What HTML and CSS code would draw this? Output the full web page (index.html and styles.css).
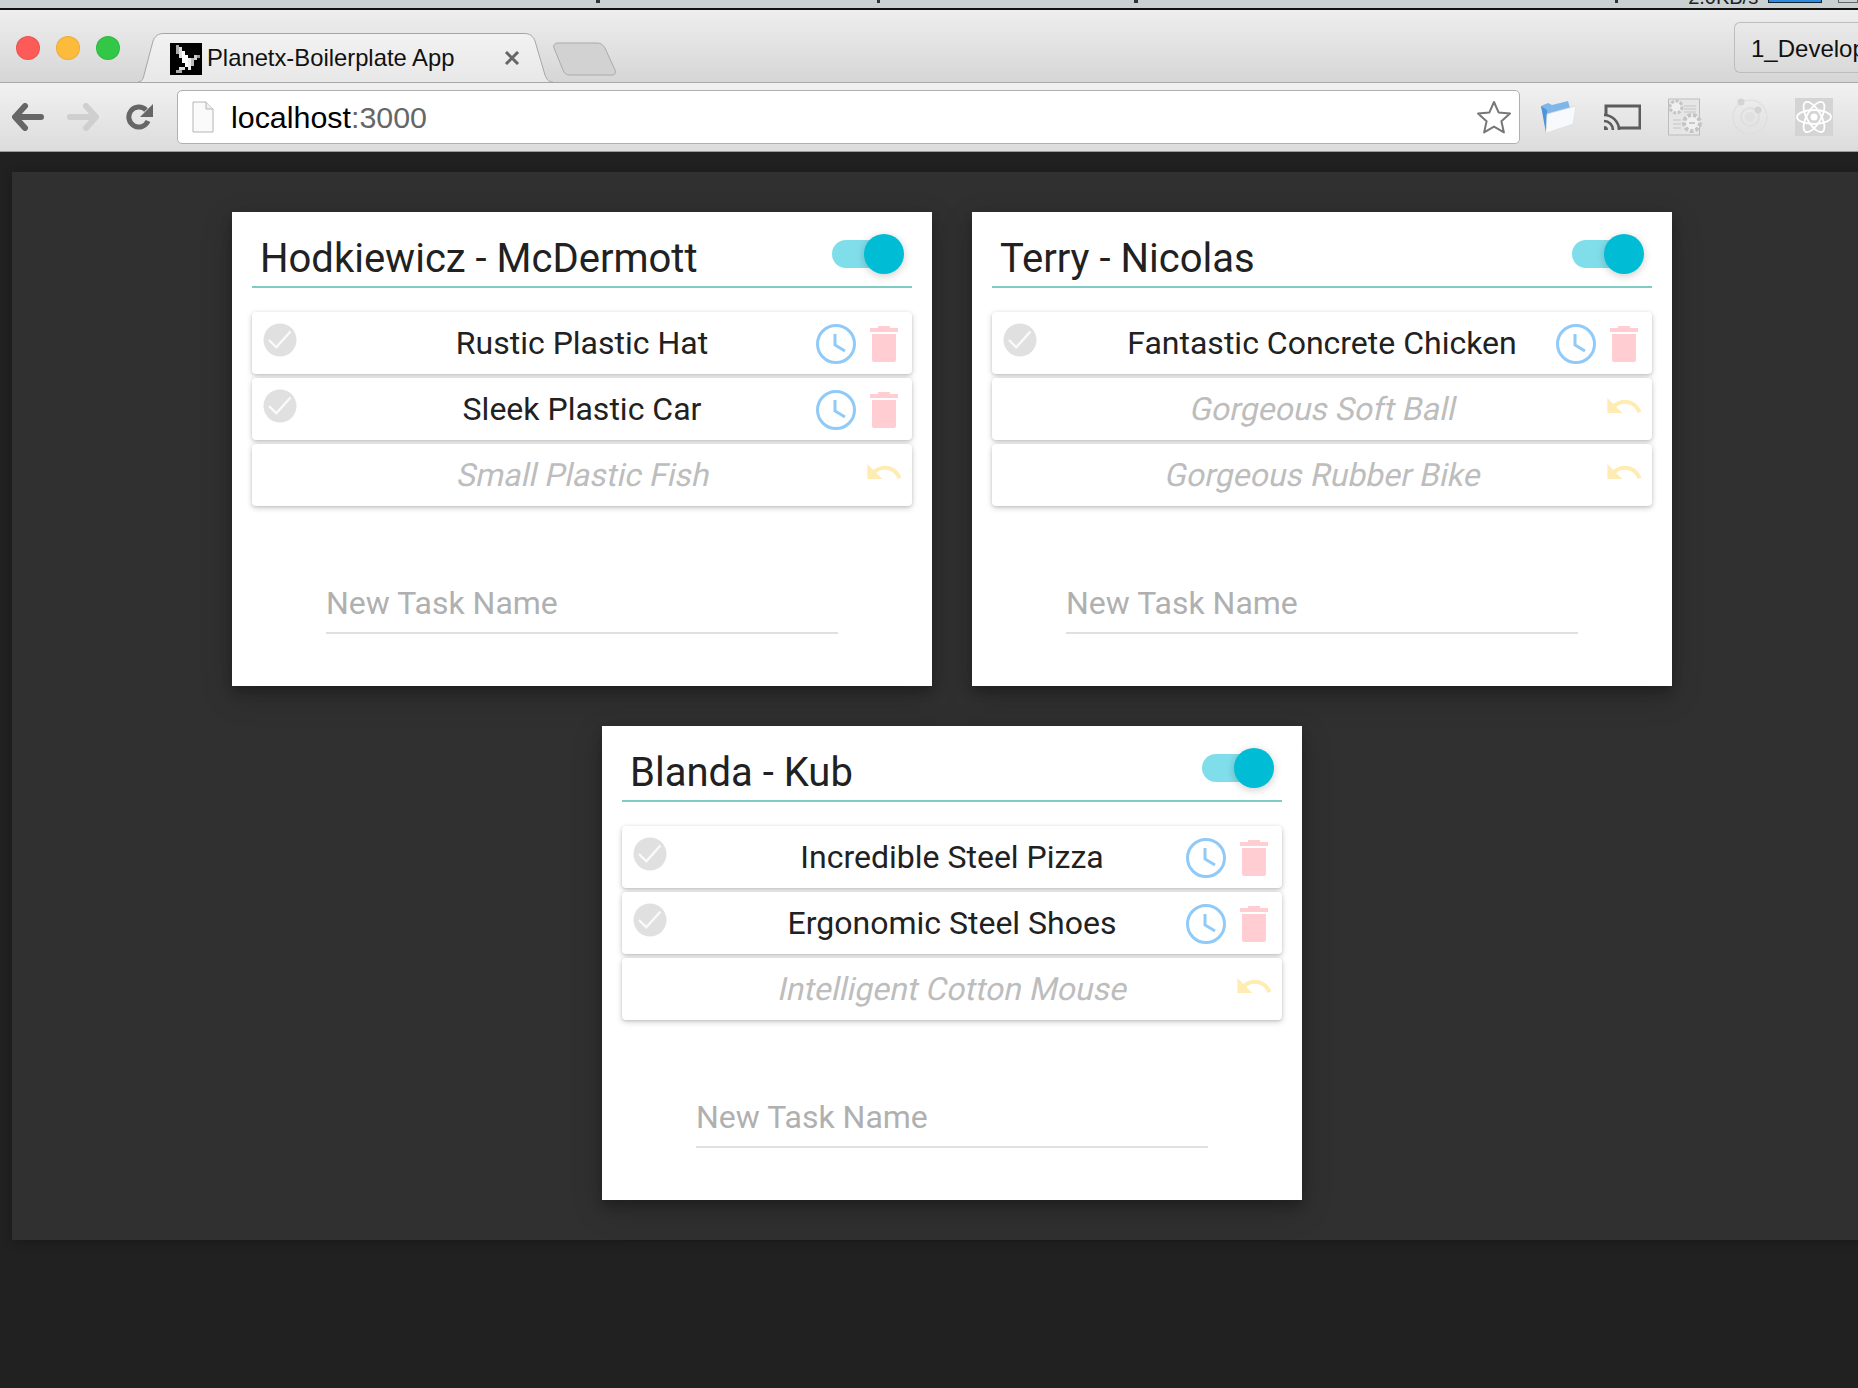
FILE: index.html
```html
<!DOCTYPE html>
<html lang="en">
<head>
    <meta charset="UTF-8">
    <meta name="viewport" content="width=device-width, initial-scale=1.0">
    <title>Planetx-Boilerplate App</title>
    <link rel="stylesheet" href="styles.css">
</head>
<body>
    <!-- Bottom edge of the OS menu bar -->
    <div class="menubar">
        <span class="tick tick-a"></span>
        <span class="tick tick-b"></span>
        <span class="tick tick-c"></span>
        <span class="tick tick-d"></span>
        <span class="net-speed">2.0KB/s</span>
        <span class="net-meter"></span>
        <span class="net-box"></span>
    </div>

    <!-- Browser tabs -->
    <div class="tabstrip">
        <span class="light light-red"></span>
        <span class="light light-yellow"></span>
        <span class="light light-green"></span>
        <div class="tab">
            <svg class="tab-shape" viewBox="0 0 415 50" preserveAspectRatio="none">
                <defs>
                    <linearGradient id="tabFill" x1="0" y1="0" x2="0" y2="1">
                        <stop offset="0" stop-color="#f2f2f2"/>
                        <stop offset="1" stop-color="#e8e8e8"/>
                    </linearGradient>
                </defs>
                <path d="M0 49C3 49 5 47 6 42L15 8C17 3 20 .5 26 .5H386C392 .5 395 3 397 8L407 42C409 47 411 49 415 49" fill="url(#tabFill)" stroke="#a6a6a6"/>
            </svg>
            <svg class="favicon" viewBox="0 0 32 32" shape-rendering="crispEdges">
                <rect width="32" height="32" fill="#000"/>
                <rect x="6" y="2" width="3" height="9" fill="#aaa"/>
                <rect x="9" y="4" width="3" height="11" fill="#ddd"/>
                <rect x="12" y="8" width="3" height="12" fill="#fff"/>
                <rect x="15" y="12" width="3" height="12" fill="#fff"/>
                <rect x="18" y="15" width="3" height="12" fill="#eee"/>
                <rect x="21" y="15" width="3" height="8" fill="#bbb"/>
                <rect x="24" y="12" width="3" height="5" fill="#ccc"/>
                <rect x="27" y="12" width="3" height="3" fill="#999"/>
                <rect x="9" y="24" width="6" height="3" fill="#ddd"/>
                <rect x="6" y="27" width="6" height="3" fill="#aaa"/>
            </svg>
            <span class="tab-title">Planetx-Boilerplate App</span>
            <svg class="tab-close" viewBox="0 0 16 14">
                <path d="M2 1L14 13M14 1L2 13" stroke="#666" stroke-width="3" fill="none"/>
            </svg>
        </div>
        <svg class="new-tab" viewBox="0 0 64 34">
            <path d="M1 6C0 3 2 1 5 1H44C48 1 50 3 52 6L62 28C63 31 62 33 59 33H17C13 33 11 31 10 28Z" fill="#d2d2d2" stroke="#aaa"/>
        </svg>
        <div class="profile">1_Develop</div>
    </div>

    <!-- Browser toolbar -->
    <div class="toolbar">
        <svg class="nav-icon nav-back" viewBox="0 0 32 28">
            <path d="M13 3L3 14L13 25M4 14H29" fill="none" stroke="#666" stroke-width="6" stroke-linecap="round" stroke-linejoin="round"/>
        </svg>
        <svg class="nav-icon nav-forward" viewBox="0 0 32 28">
            <path d="M19 3L29 14L19 25M28 14H3" fill="none" stroke="#cfcfcf" stroke-width="6" stroke-linecap="round" stroke-linejoin="round"/>
        </svg>
        <svg class="nav-icon nav-reload" viewBox="0 0 28 28">
            <path d="M22 18A10 10 0 1 1 20 7" fill="none" stroke="#666" stroke-width="5"/>
            <path d="M27 1V14H14Z" fill="#666"/>
        </svg>
        <div class="address">
            <svg class="doc-icon" viewBox="0 0 24 32">
                <path d="M2 1H15L22 8V31H2Z" fill="#fafafa" stroke="#b4b4b4"/>
                <path d="M15 1V8H22" fill="#eee" stroke="#b4b4b4"/>
            </svg>
            <span class="url">localhost<span class="url-port">:3000</span></span>
            <svg class="star" viewBox="0 0 36 34">
                <path d="M18 2L22.6 12.4L34 13.6L25.4 21.2L27.9 32.4L18 26.6L8.1 32.4L10.6 21.2L2 13.6L13.4 12.4Z" fill="#fff" stroke="#777" stroke-width="2" stroke-linejoin="round"/>
            </svg>
        </div>
        <div class="ext-slot ext-slot-first">
            <svg class="ext-folder" viewBox="0 0 36 34">
                <path d="M1 6L8 3L12 5L28 1L30 8L7 30Z" fill="#7fb6ea"/>
                <path d="M6 33L1 6L7 10Z" fill="#4f93d8"/>
                <path d="M7 14L36 6L33 24L6 33Z" fill="#f7f9fb" stroke="#d5dde4" stroke-width=".6"/>
            </svg>
        </div>
        <div class="ext-slot">
            <svg class="ext-cast" viewBox="0 0 38 28">
                <path d="M3 13V3H37V25H17" fill="none" stroke="#5c5c5c" stroke-width="3"/>
                <path d="M1 12A15 15 0 0 1 16 27M1 18A9 9 0 0 1 10 27" fill="none" stroke="#5c5c5c" stroke-width="2.6"/>
                <path d="M1 23A4 4 0 0 1 5 27H1Z" fill="#5c5c5c"/>
            </svg>
        </div>
        <div class="ext-slot">
            <svg class="ext-gears" viewBox="0 0 38 38">
                <rect x="1.500" y="1" width="31" height="36" fill="#e6e6e6" stroke="#bdbdbd"/>
                <path d="M17 8H29M17 11H29M17 14H29M6 22H14M6 26H14M6 30H14" stroke="#cfcfcf" stroke-width="1.500"/>
                <circle cx="9" cy="9" r="6" fill="#f0f0f0" stroke="#c4c4c4" stroke-width="3" stroke-dasharray="3 1.500"/>
                <circle cx="25" cy="25" r="8" fill="#f0f0f0" stroke="#c4c4c4" stroke-width="4" stroke-dasharray="3.500 2"/>
                <path d="M22 25H28" stroke="#bdbdbd" stroke-width="1.500"/>
            </svg>
        </div>
        <div class="ext-slot">
            <svg class="ext-ring" viewBox="0 0 36 38">
                <circle cx="18" cy="19" r="17" fill="none" stroke="#dedede" stroke-width="1.200"/>
                <circle cx="18" cy="19" r="9" fill="none" stroke="#dedede" stroke-width="2"/>
                <circle cx="18" cy="19" r="5" fill="#e0e0e0"/>
                <circle cx="9" cy="4" r="3.500" fill="#d4d4d4"/>
                <circle cx="26" cy="12" r="3.500" fill="#d4d4d4"/>
            </svg>
        </div>
        <div class="ext-slot">
            <svg class="ext-react" viewBox="0 0 38 38">
                <rect width="38" height="38" fill="#d4d4d4"/>
                <g fill="none" stroke="#fff" stroke-width="1.800">
                    <ellipse cx="19" cy="19" rx="17" ry="7"/>
                    <ellipse cx="19" cy="19" rx="17" ry="7" transform="rotate(60 19 19)"/>
                    <ellipse cx="19" cy="19" rx="17" ry="7" transform="rotate(120 19 19)"/>
                </g>
                <circle cx="19" cy="19" r="3.500" fill="#fff"/>
            </svg>
        </div>
    </div>

    <!-- App -->
    <div class="page">
        <div class="board">

            <div class="card">
                <div class="card-header">
                    <h2 class="card-title">Hodkiewicz - McDermott</h2>
                    <div class="toggle"><span class="toggle-track"></span><span class="toggle-thumb"></span></div>
                </div>
                <div class="task-list">
                    <div class="task">
                        <svg class="check" viewBox="0 0 34 34"><circle cx="17" cy="17" r="16.500"/><path d="M6 17L13.300 24.300L27.500 8.500"/></svg>
                        <span class="task-name">Rustic Plastic Hat</span>
                        <div class="task-actions">
                            <svg class="clock" viewBox="0 0 40 40"><circle cx="20" cy="20" r="18.500"/><path d="M19 10V21L29 27"/></svg>
                            <svg class="trash" viewBox="0 0 28 36"><path d="M8 0H20V2H28V6H0V2H8ZM2 8H26V34C26 35 25 36 24 36H4C3 36 2 35 2 34Z"/></svg>
                        </div>
                    </div>
                    <div class="task">
                        <svg class="check" viewBox="0 0 34 34"><circle cx="17" cy="17" r="16.500"/><path d="M6 17L13.300 24.300L27.500 8.500"/></svg>
                        <span class="task-name">Sleek Plastic Car</span>
                        <div class="task-actions">
                            <svg class="clock" viewBox="0 0 40 40"><circle cx="20" cy="20" r="18.500"/><path d="M19 10V21L29 27"/></svg>
                            <svg class="trash" viewBox="0 0 28 36"><path d="M8 0H20V2H28V6H0V2H8ZM2 8H26V34C26 35 25 36 24 36H4C3 36 2 35 2 34Z"/></svg>
                        </div>
                    </div>
                    <div class="task task-done">
                        <span></span>
                        <span class="task-name">Small Plastic Fish</span>
                        <div class="task-actions">
                            <svg class="undo" viewBox="2 7 20 9"><path d="M12.500 8c-2.650 0-5.050.99-6.900 2.600L2 7v9h9l-3.620-3.620c1.390-1.160 3.160-1.880 5.120-1.880 3.540 0 6.550 2.310 7.600 5.500l2.370-.78C21.080 11.030 17.150 8 12.500 8z"/></svg>
                        </div>
                    </div>
                </div>
                <input class="new-task" type="text" placeholder="New Task Name">
            </div>

            <div class="card">
                <div class="card-header">
                    <h2 class="card-title">Terry - Nicolas</h2>
                    <div class="toggle"><span class="toggle-track"></span><span class="toggle-thumb"></span></div>
                </div>
                <div class="task-list">
                    <div class="task">
                        <svg class="check" viewBox="0 0 34 34"><circle cx="17" cy="17" r="16.500"/><path d="M6 17L13.300 24.300L27.500 8.500"/></svg>
                        <span class="task-name">Fantastic Concrete Chicken</span>
                        <div class="task-actions">
                            <svg class="clock" viewBox="0 0 40 40"><circle cx="20" cy="20" r="18.500"/><path d="M19 10V21L29 27"/></svg>
                            <svg class="trash" viewBox="0 0 28 36"><path d="M8 0H20V2H28V6H0V2H8ZM2 8H26V34C26 35 25 36 24 36H4C3 36 2 35 2 34Z"/></svg>
                        </div>
                    </div>
                    <div class="task task-done">
                        <span></span>
                        <span class="task-name">Gorgeous Soft Ball</span>
                        <div class="task-actions">
                            <svg class="undo" viewBox="2 7 20 9"><path d="M12.500 8c-2.650 0-5.050.99-6.900 2.600L2 7v9h9l-3.620-3.620c1.390-1.160 3.160-1.880 5.120-1.880 3.540 0 6.550 2.310 7.600 5.500l2.370-.78C21.080 11.030 17.150 8 12.500 8z"/></svg>
                        </div>
                    </div>
                    <div class="task task-done">
                        <span></span>
                        <span class="task-name">Gorgeous Rubber Bike</span>
                        <div class="task-actions">
                            <svg class="undo" viewBox="2 7 20 9"><path d="M12.500 8c-2.650 0-5.050.99-6.900 2.600L2 7v9h9l-3.620-3.620c1.390-1.160 3.160-1.880 5.120-1.880 3.540 0 6.550 2.310 7.600 5.500l2.370-.78C21.080 11.030 17.150 8 12.500 8z"/></svg>
                        </div>
                    </div>
                </div>
                <input class="new-task" type="text" placeholder="New Task Name">
            </div>

            <div class="card">
                <div class="card-header">
                    <h2 class="card-title">Blanda - Kub</h2>
                    <div class="toggle"><span class="toggle-track"></span><span class="toggle-thumb"></span></div>
                </div>
                <div class="task-list">
                    <div class="task">
                        <svg class="check" viewBox="0 0 34 34"><circle cx="17" cy="17" r="16.500"/><path d="M6 17L13.300 24.300L27.500 8.500"/></svg>
                        <span class="task-name">Incredible Steel Pizza</span>
                        <div class="task-actions">
                            <svg class="clock" viewBox="0 0 40 40"><circle cx="20" cy="20" r="18.500"/><path d="M19 10V21L29 27"/></svg>
                            <svg class="trash" viewBox="0 0 28 36"><path d="M8 0H20V2H28V6H0V2H8ZM2 8H26V34C26 35 25 36 24 36H4C3 36 2 35 2 34Z"/></svg>
                        </div>
                    </div>
                    <div class="task">
                        <svg class="check" viewBox="0 0 34 34"><circle cx="17" cy="17" r="16.500"/><path d="M6 17L13.300 24.300L27.500 8.500"/></svg>
                        <span class="task-name">Ergonomic Steel Shoes</span>
                        <div class="task-actions">
                            <svg class="clock" viewBox="0 0 40 40"><circle cx="20" cy="20" r="18.500"/><path d="M19 10V21L29 27"/></svg>
                            <svg class="trash" viewBox="0 0 28 36"><path d="M8 0H20V2H28V6H0V2H8ZM2 8H26V34C26 35 25 36 24 36H4C3 36 2 35 2 34Z"/></svg>
                        </div>
                    </div>
                    <div class="task task-done">
                        <span></span>
                        <span class="task-name">Intelligent Cotton Mouse</span>
                        <div class="task-actions">
                            <svg class="undo" viewBox="2 7 20 9"><path d="M12.500 8c-2.650 0-5.050.99-6.900 2.600L2 7v9h9l-3.620-3.620c1.390-1.160 3.160-1.880 5.120-1.880 3.540 0 6.550 2.310 7.600 5.500l2.370-.78C21.080 11.030 17.150 8 12.500 8z"/></svg>
                        </div>
                    </div>
                </div>
                <input class="new-task" type="text" placeholder="New Task Name">
            </div>

        </div>
    </div>
</body>
</html>
```

FILE: styles.css
```css
html, body {
    margin: 0;
    height: 1388px;
    overflow: hidden;
}
body {
    background-color: #212121;
    font-family: Roboto, sans-serif;
}
svg {
    display: block;
    flex-shrink: 0;
}

/* OS menu bar */
.menubar {
    display: flex;
    align-items: flex-start;
    height: 8px;
    background-color: #cbd0d2;
    border-bottom: 2px solid #111;
    overflow: hidden;
    font-family: "Liberation Sans", sans-serif;
}
.tick {
    width: 4px;
    height: 3px;
    background-color: #333;
}
.tick-a { margin-left: 596px; }
.tick-b { margin-left: 277px; }
.tick-c { margin-left: 254px; }
.tick-d { margin-left: 477px; }
.net-speed {
    margin: -15px 0 0 70px;
    font-size: 20px;
    line-height: 24px;
    color: #222;
}
.net-meter {
    width: 59px;
    height: 2px;
    margin-left: 10px;
    background-color: #2a8be0;
    border: 1px solid #123;
    border-top: 0;
}
.net-box {
    width: 20px;
    height: 2px;
    margin-left: 16px;
    border: 1px solid #666;
    border-top: 0;
}

/* Tabs */
.tabstrip {
    display: flex;
    height: 72px;
    padding-left: 16px;
    background: linear-gradient(#eeeeee, #d6d6d6);
    border-bottom: 1px solid #a8a8a8;
    font-family: "Liberation Sans", sans-serif;
}
.light {
    width: 24px;
    height: 24px;
    margin: 26px 16px 0 0;
    border-radius: 50%;
    box-sizing: border-box;
    border: 1px solid rgba(0, 0, 0, 0.08);
}
.light-red { background-color: #fc5b57; }
.light-yellow { background-color: #fdbb3c; }
.light-green {
    margin-right: 18px;
    background-color: #33c748;
}
.tab {
    position: relative;
    display: flex;
    align-items: center;
    width: 415px;
    height: 50px;
    margin-top: 23px;
    padding-left: 32px;
    box-sizing: border-box;
}
.tab-shape {
    position: absolute;
    left: 0;
    top: 0;
    width: 415px;
    height: 50px;
}
.favicon {
    position: relative;
    width: 32px;
    height: 32px;
    margin-top: 1px;
}
.tab-title {
    position: relative;
    margin-left: 5px;
    font-size: 23.800px;
    color: #111;
}
.tab-close {
    position: relative;
    width: 16px;
    height: 14px;
    margin-left: 50px;
}
.new-tab {
    width: 64px;
    height: 34px;
    margin-top: 32px;
}
.profile {
    margin: 12px 0 0 auto;
    width: 107px;
    height: 49px;
    padding-left: 16px;
    border: 1px solid #bdbdbd;
    border-right: 0;
    border-radius: 6px 0 0 6px;
    font-size: 24px;
    line-height: 52px;
    color: #111;
    white-space: nowrap;
    overflow: hidden;
}

/* Toolbar */
.toolbar {
    display: flex;
    align-items: center;
    height: 68px;
    padding-left: 12px;
    background: linear-gradient(#f1f1f1, #dcdcdc);
    border-bottom: 1px solid #9a9a9a;
}
.nav-icon {
    width: 32px;
    height: 28px;
}
.nav-forward { margin-left: 23px; }
.nav-reload {
    width: 28px;
    margin-left: 27px;
}
.address {
    display: flex;
    align-items: center;
    width: 1341px;
    height: 52px;
    margin-left: 23px;
    background-color: #fff;
    border: 1px solid #b0b0b0;
    border-radius: 5px;
}
.doc-icon {
    width: 24px;
    height: 32px;
    margin-left: 13px;
}
.url {
    margin-left: 16px;
    font-family: "Liberation Sans", sans-serif;
    font-size: 30.400px;
    color: #000;
}
.url-port { color: #666; }
.star {
    width: 36px;
    height: 34px;
    margin-left: auto;
    margin-right: 7px;
}
.ext-slot {
    display: flex;
    justify-content: center;
    width: 64px;
}
.ext-slot-first { margin-left: 6px; }
.ext-folder { width: 36px; height: 34px; }
.ext-cast { width: 38px; height: 28px; }
.ext-gears { width: 38px; height: 38px; }
.ext-ring { width: 36px; height: 38px; }
.ext-react { width: 38px; height: 38px; }

/* App */
.page {
    width: 1880px;
    margin: 20px 0 0 12px;
    background-color: #303030;
    box-shadow: 0 2px 10px rgba(0, 0, 0, 0.25);
}
.board {
    display: flex;
    flex-wrap: wrap;
    justify-content: center;
    gap: 40px;
    padding: 40px 0;
}
.card {
    width: 700px;
    height: 474px;
    padding: 0 20px;
    box-sizing: border-box;
    background-color: #fff;
    box-shadow: 0 10px 30px rgba(0, 0, 0, 0.19), 0 6px 10px rgba(0, 0, 0, 0.23);
}
.card-header {
    display: flex;
    justify-content: space-between;
    height: 74px;
    padding: 0 8px;
    border-bottom: 2px solid #80cbc4;
}
.card-title {
    margin: 22px 0 0;
    font-size: 40px;
    font-weight: 400;
    line-height: 50px;
    color: #212121;
    white-space: nowrap;
}
.toggle {
    position: relative;
    width: 72px;
    height: 40px;
    margin-top: 22px;
}
.toggle-track {
    position: absolute;
    left: 0;
    top: 6px;
    width: 60px;
    height: 28px;
    border-radius: 14px;
    background-color: #80deea;
}
.toggle-thumb {
    position: absolute;
    right: 0;
    top: 0;
    width: 40px;
    height: 40px;
    border-radius: 50%;
    background-color: #00bcd4;
    box-shadow: 0 2px 8px rgba(0, 0, 0, 0.2);
}
.task-list {
    display: flex;
    flex-direction: column;
    gap: 4px;
    margin-top: 24px;
}
.task {
    display: grid;
    grid-template-columns: 1fr auto 1fr;
    height: 62px;
    border-radius: 4px;
    background-color: #fff;
    box-shadow: 0 2px 6px rgba(0, 0, 0, 0.18), 0 1px 3px rgba(0, 0, 0, 0.12);
}
.task-name {
    font-size: 32px;
    line-height: 62px;
    color: #212121;
    white-space: nowrap;
}
/* slanted upright face, the Roboto italic cut is too narrow here */
.task-done .task-name {
    color: #bdbdbd;
    transform: translateX(2px) skewX(-12deg);
}
.task-actions {
    display: flex;
    justify-content: flex-end;
    gap: 14px;
    padding-right: 14px;
}
.check {
    width: 34px;
    height: 34px;
    margin: 11px 0 0 11px;
}
.check circle { fill: #e0e0e0; }
.check path {
    fill: none;
    stroke: #fafafa;
    stroke-width: 2.400;
}
.clock {
    width: 40px;
    height: 40px;
    margin-top: 12px;
    fill: none;
    stroke: #90caf9;
    stroke-width: 3;
}
.trash {
    width: 28px;
    height: 36px;
    margin-top: 14px;
    fill: #ffcdd2;
}
.undo {
    width: 34px;
    height: 15px;
    margin: 20px -3px 0 0;
    fill: #ffecb3;
}
.new-task {
    display: block;
    width: 512px;
    height: 60px;
    margin: 68px 0 0 74px;
    padding: 0;
    border: 0;
    border-bottom: 2px solid #e0e0e0;
    box-sizing: border-box;
    font-family: Roboto, sans-serif;
    font-size: 32px;
    color: #212121;
    outline: none;
}
.new-task::placeholder {
    color: #b0b0b0;
    opacity: 1;
}
```
